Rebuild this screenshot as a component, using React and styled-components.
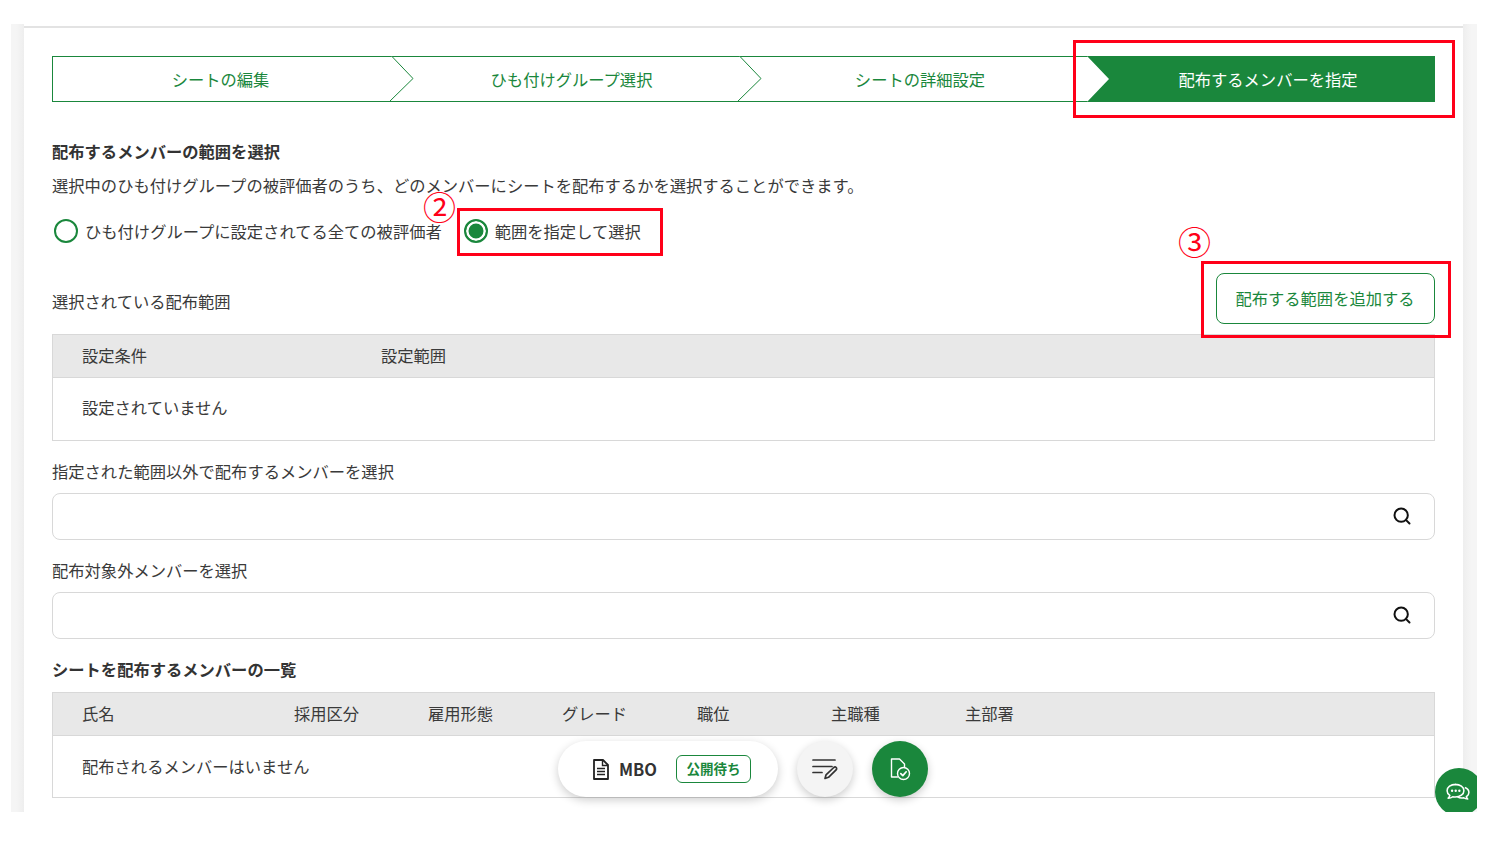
import React from "react";
import styled, { createGlobalStyle } from "styled-components";
import { Search } from "lucide-react";

const GREEN = "#1a873c";
const RED = "#ff0018";

const GlobalStyle = createGlobalStyle`
	html, body {
		margin: 0;
		padding: 0;
		background: #fff;
	}
	body {
		font-family: "Noto Sans CJK JP", "Noto Sans", sans-serif;
		font-size: 16.3px;
		color: #3a3a3a;
	}
`;

const Frame = styled.div`
	position: relative;
	display: flex;
	width: 1466px;
	height: 788px;
	margin: 24px 0 0 11px;
	overflow: hidden;
`;

const Side = styled.div`
	flex: none;
	width: ${(p) => p.$width}px;
	background: linear-gradient(${(p) => (p.$right ? "to left" : "to right")}, #f5f5f5 40%, #eeeeee);
`;

const Card = styled.main`
	flex: 1;
	margin-top: 2px;
	padding: 28px 28px 0;
	border-top: 2px solid #e3e3e3;
	background: #fff;
`;

const Stepper = styled.div`
	display: flex;
	height: 46px;
	width: 1383px;
`;

const Step = styled.div`
	position: relative;
	flex: none;
	box-sizing: border-box;
	width: ${(p) => p.$width}px;
	padding: 0 ${(p) => p.$padR || 0}px 0 ${(p) => p.$pad}px;
	display: flex;
	align-items: center;
	justify-content: center;
	border-top: 1px solid ${GREEN};
	border-bottom: 1px solid ${GREEN};
	border-left: ${(p) => (p.$first ? `1px solid ${GREEN}` : "0")};
	color: ${GREEN};
`;

const ActiveStep = styled(Step)`
	background: ${GREEN};
	color: #fff;
	clip-path: polygon(0 0, 100% 0, 100% 100%, 0 100%, 22px 50%);
`;

const StepArrow = styled.svg`
	position: absolute;
	top: -1px;
	right: -24px;
	width: 25px;
	height: 46px;
	z-index: 1;
`;

const Heading = styled.h2`
	margin: ${(p) => p.$top}px 0 0;
	padding-bottom: 2px;
	font-size: 16.3px;
	line-height: 22px;
	font-weight: 700;
	color: #333;
`;

const Text = styled.p`
	margin: ${(p) => p.$top}px 0 0;
	padding-bottom: 2px;
	line-height: 22px;
`;

const RadioRow = styled.div`
	display: flex;
	align-items: center;
	height: 24px;
	margin-top: 21px;
	padding-left: 2px;
`;

const RadioLabel = styled.label`
	display: flex;
	align-items: center;
	gap: 7px;
	margin-right: 22px;
	white-space: nowrap;
	line-height: 22px;
`;

const RadioMark = styled.span`
	box-sizing: border-box;
	width: 24px;
	height: 24px;
	border-radius: 50%;
	border: 2.5px solid ${GREEN};
	background: ${(p) => (p.$on ? GREEN : "#fff")};
	box-shadow: ${(p) => (p.$on ? "inset 0 0 0 2.5px #fff" : "none")};
`;

const RangeRow = styled.div`
	display: flex;
	justify-content: space-between;
	align-items: center;
	margin-top: 30px;
	height: 51px;
`;

const RangeLabel = styled.span`
	padding-top: 5px;
`;

const OutlineButton = styled.button`
	box-sizing: border-box;
	width: 219px;
	height: 51px;
	padding: 0 1px 2px 0;
	border: 1px solid ${GREEN};
	border-radius: 8px;
	background: #fff;
	color: ${GREEN};
	font: inherit;
`;

const Table = styled.div`
	margin-top: 10px;
	border: 1px solid #d8d8d8;
`;

const TableHead = styled.div`
	box-sizing: border-box;
	display: grid;
	grid-template-columns: ${(p) => p.$cols};
	height: 43px;
	align-items: center;
	padding: 0 0 3px 29px;
	background: #e8e8e8;
	border-bottom: 1px solid #d8d8d8;
`;

const TableBody = styled.div`
	box-sizing: border-box;
	display: flex;
	align-items: center;
	height: ${(p) => p.$height}px;
	padding: 0 0 ${(p) => p.$pb}px 29px;
`;

const SearchField = styled.div`
	box-sizing: border-box;
	display: flex;
	align-items: center;
	justify-content: flex-end;
	height: 47px;
	margin-top: 9px;
	padding: 0 22px 2px 0;
	border: 1px solid #d8d8d8;
	border-radius: 8px;
	color: #111;
`;

const RedBox = styled.div`
	position: absolute;
	box-sizing: border-box;
	left: ${(p) => p.$x}px;
	top: ${(p) => p.$y}px;
	width: ${(p) => p.$w}px;
	height: ${(p) => p.$h}px;
	border: 3.5px solid ${RED};
	z-index: 3;
`;

const Circled = styled.span`
	position: absolute;
	left: ${(p) => p.$x}px;
	top: ${(p) => p.$y}px;
	font-size: 33px;
	line-height: 34px;
	color: ${RED};
	z-index: 3;
`;

const FloatBar = styled.div`
	position: absolute;
	left: 547px;
	top: 717px;
	display: flex;
	gap: 19px;
	z-index: 2;
`;

const Pill = styled.div`
	box-sizing: border-box;
	display: flex;
	align-items: center;
	width: 220px;
	height: 56px;
	padding-left: 35px;
	border-radius: 28px;
	background: #fff;
	box-shadow: 0 3px 10px rgba(0, 0, 0, 0.2);
`;

const PillTitle = styled.strong`
	margin-left: 10px;
	font-size: 16.5px;
	font-weight: 700;
	color: #333;
`;

const Tag = styled.span`
	box-sizing: border-box;
	display: flex;
	align-items: center;
	justify-content: center;
	width: 75px;
	height: 28px;
	margin-left: 19px;
	padding-bottom: 2px;
	border: 1px solid ${GREEN};
	border-radius: 6px;
	color: ${GREEN};
	font-size: 13.5px;
	font-weight: 700;
`;

const RoundButton = styled.button`
	display: flex;
	align-items: center;
	justify-content: center;
	width: 56px;
	height: 56px;
	padding: 0;
	border: 0;
	border-radius: 50%;
	background: ${(p) => (p.$green ? GREEN : "#f4f4f4")};
	box-shadow: 0 3px 8px rgba(0, 0, 0, 0.2);
`;

const ChatButton = styled(RoundButton)`
	position: absolute;
	left: 1424px;
	top: 744px;
	width: 48px;
	height: 48px;
	padding: 1px 2px 0 0;
	background: ${GREEN};
	box-shadow: none;
	z-index: 2;
`;

const DocIcon = () => (
	<svg width="16" height="21" viewBox="0 0 16 21" fill="none" stroke="#222" strokeWidth="1.8">
		<path d="M1 1h9l5 5v14H1z" strokeLinejoin="round" />
		<path d="M4 9.500h8M4 12.500h8M4 15.500h8" strokeWidth="1.400" />
		<path d="M9.500 1v5.500H15" strokeWidth="1.400" />
	</svg>
);

const EditListIcon = () => (
	<svg width="26" height="22" viewBox="0 0 26 22" fill="none" stroke="#333" strokeWidth="1.7" strokeLinecap="round">
		<path d="M1 2h22M1 8.500h19M1 14.500h9" />
		<path d="M13 20.500l1-3.600 7.800-7.400c.8-.7 1.800-.6 2.400 0s.6 1.600-.1 2.300l-7.600 7.500z" strokeLinejoin="round" />
	</svg>
);

const FileCheckIcon = () => (
	<svg width="24" height="24" viewBox="0 0 24 24" fill="none" stroke="#fff" strokeWidth="1.4" strokeLinecap="round" strokeLinejoin="round">
		<path d="M9.500 20H3.500V2h8l5 5v3" />
		<circle cx="15.500" cy="16.500" r="6" />
		<path d="M12.800 16.600l2 2 3.400-3.800" strokeWidth="1.700" />
	</svg>
);

const ChatIcon = () => (
	<svg width="26" height="20" viewBox="0 0 28 22" fill="none" stroke="#fff" strokeWidth="1.700" strokeLinejoin="round">
		<path d="M11.500 1.500c-5.500 0-9.500 3-9.500 7 0 2.200 1.200 4 3 5.200-.2 1.200-.8 2.200-1.800 3 2 0 3.800-.6 5-1.600.9.200 1.800.3 2.800.3 5.300 0 9.500-3 9.500-6.900s-4.200-7-9.500-7z" />
		<path d="M21.500 5c2.700 1 4.500 3 4.500 5.500 0 1.900-1.100 3.500-2.800 4.600.2 1 .7 1.800 1.500 2.500-1.800 0-3.300-.5-4.400-1.400-2.400.5-5 .1-6.800-1" />
		<circle cx="7.500" cy="8.500" r="1.300" fill="#fff" stroke="none" />
		<circle cx="11.500" cy="8.500" r="1.300" fill="#fff" stroke="none" />
		<circle cx="15.500" cy="8.500" r="1.300" fill="#fff" stroke="none" />
	</svg>
);

const Arrow = () => (
	<StepArrow viewBox="0 0 25 46">
		<path d="M2.500 0L24 22.500 0 46" fill="#fff" stroke={GREEN} strokeWidth="1" />
	</StepArrow>
);

const MEMBER_COLS = "212px 134px 134px 135px 134px 134px 1fr";

export default function App() {
	return (
		<>
			<GlobalStyle />
			<Frame>
				<Side $width={13} />
				<Card>
					<Stepper>
						<Step $first $width={338} $pad={0} $padR={2}>
							シートの編集
							<Arrow />
						</Step>
						<Step $width={348} $pad={15}>
							ひも付けグループ選択
							<Arrow />
						</Step>
						<Step $width={349} $pad={15}>
							シートの詳細設定
						</Step>
						<ActiveStep $width={348} $pad={14}>
							配布するメンバーを指定
						</ActiveStep>
					</Stepper>

					<Heading $top={38}>配布するメンバーの範囲を選択</Heading>
					<Text $top={10}>
						選択中のひも付けグループの被評価者のうち、どのメンバーにシートを配布するかを選択することができます。
					</Text>

					<RadioRow>
						<RadioLabel>
							<RadioMark />
							ひも付けグループに設定されてる全ての被評価者
						</RadioLabel>
						<RadioLabel>
							<RadioMark $on />
							範囲を指定して選択
						</RadioLabel>
					</RadioRow>

					<RangeRow>
						<RangeLabel>選択されている配布範囲</RangeLabel>
						<OutlineButton>配布する範囲を追加する</OutlineButton>
					</RangeRow>

					<Table>
						<TableHead $cols="299px 1fr">
							<span>設定条件</span>
							<span>設定範囲</span>
						</TableHead>
						<TableBody $height={62} $pb={5}>設定されていません</TableBody>
					</Table>

					<Text $top={19}>指定された範囲以外で配布するメンバーを選択</Text>
					<SearchField>
						<Search size={20} strokeWidth={2.4} />
					</SearchField>

					<Text $top={19}>配布対象外メンバーを選択</Text>
					<SearchField>
						<Search size={20} strokeWidth={2.4} />
					</SearchField>

					<Heading $top={19}>シートを配布するメンバーの一覧</Heading>
					<Table>
						<TableHead $cols={MEMBER_COLS}>
							<span>氏名</span>
							<span>採用区分</span>
							<span>雇用形態</span>
							<span>グレード</span>
							<span>職位</span>
							<span>主職種</span>
							<span>主部署</span>
						</TableHead>
						<TableBody $height={61} $pb={1}>配布されるメンバーはいません</TableBody>
					</Table>
				</Card>
				<Side $width={14} $right />

				<FloatBar>
					<Pill>
						<DocIcon />
						<PillTitle>MBO</PillTitle>
						<Tag>公開待ち</Tag>
					</Pill>
					<RoundButton>
						<EditListIcon />
					</RoundButton>
					<RoundButton $green>
						<FileCheckIcon />
					</RoundButton>
				</FloatBar>
				<ChatButton>
					<ChatIcon />
				</ChatButton>

				<RedBox $x={1062} $y={16} $w={382} $h={78} />
				<RedBox $x={446} $y={184} $w={206} $h={48} />
				<RedBox $x={1190} $y={237} $w={250} $h={77} />
				<Circled $x={412} $y={165}>②</Circled>
				<Circled $x={1167} $y={200}>③</Circled>
			</Frame>
		</>
	);
}
